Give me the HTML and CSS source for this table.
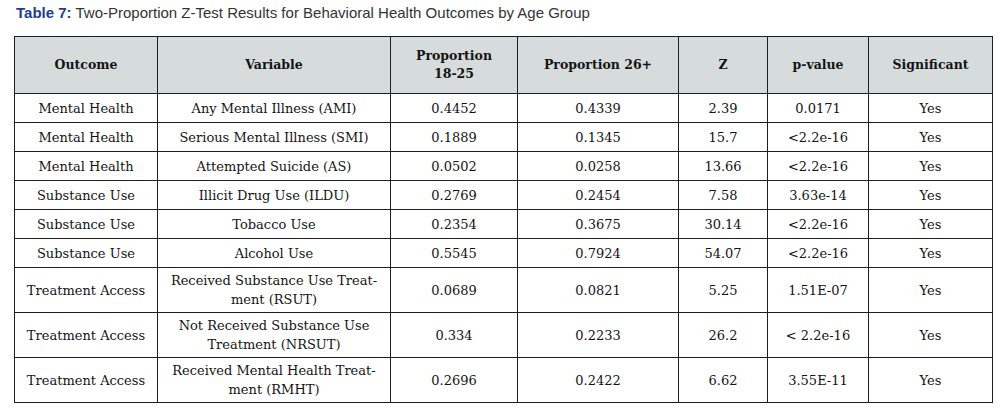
FILE: index.html
```html
<!DOCTYPE html>
<html lang="en">
<head>
<meta charset="utf-8">
<title>Table 7</title>
<link rel="stylesheet" href="styles.css">
</head>
<body>
<p class="caption"><span class="label">Table 7:</span> Two-Proportion Z-Test Results for Behavioral Health Outcomes by Age Group</p>
<table class="results">
  <colgroup>
    <col class="c1"><col class="c2"><col class="c3"><col class="c4"><col class="c5"><col class="c6"><col class="c7">
  </colgroup>
  <thead>
    <tr>
      <th>Outcome</th>
      <th>Variable</th>
      <th>Proportion<br>18-25</th>
      <th>Proportion 26+</th>
      <th>Z</th>
      <th>p-value</th>
      <th>Significant</th>
    </tr>
  </thead>
  <tbody>
    <tr><td>Mental Health</td><td>Any Mental Illness (AMI)</td><td>0.4452</td><td>0.4339</td><td>2.39</td><td>0.0171</td><td>Yes</td></tr>
    <tr><td>Mental Health</td><td>Serious Mental Illness (SMI)</td><td>0.1889</td><td>0.1345</td><td>15.7</td><td>&lt;2.2e-16</td><td>Yes</td></tr>
    <tr><td>Mental Health</td><td>Attempted Suicide (AS)</td><td>0.0502</td><td>0.0258</td><td>13.66</td><td>&lt;2.2e-16</td><td>Yes</td></tr>
    <tr><td>Substance Use</td><td>Illicit Drug Use (ILDU)</td><td>0.2769</td><td>0.2454</td><td>7.58</td><td>3.63e-14</td><td>Yes</td></tr>
    <tr><td>Substance Use</td><td>Tobacco Use</td><td>0.2354</td><td>0.3675</td><td>30.14</td><td>&lt;2.2e-16</td><td>Yes</td></tr>
    <tr><td>Substance Use</td><td>Alcohol Use</td><td>0.5545</td><td>0.7924</td><td>54.07</td><td>&lt;2.2e-16</td><td>Yes</td></tr>
    <tr><td>Treatment Access</td><td>Received Substance Use Treat-<br>ment (RSUT)</td><td>0.0689</td><td>0.0821</td><td>5.25</td><td>1.51E-07</td><td>Yes</td></tr>
    <tr><td>Treatment Access</td><td>Not Received Substance Use<br>Treatment (NRSUT)</td><td>0.334</td><td>0.2233</td><td>26.2</td><td>&lt; 2.2e-16</td><td>Yes</td></tr>
    <tr><td>Treatment Access</td><td>Received Mental Health Treat-<br>ment (RMHT)</td><td>0.2696</td><td>0.2422</td><td>6.62</td><td>3.55E-11</td><td>Yes</td></tr>
  </tbody>
</table>
</body>
</html>
```

FILE: styles.css
```css
html, body {
  margin: 0;
  padding: 0;
  background: #ffffff;
}

.caption {
  margin: 0;
  padding: 4px 0 0 16px;
  font-family: "Liberation Sans", Arial, sans-serif;
  font-size: 15px;
  line-height: 18px;
  color: #333333;
}

.caption .label {
  color: #1f3d8f;
  font-weight: bold;
}

.results {
  margin: 14px 0 0 14px;
  border-collapse: collapse;
  table-layout: fixed;
  width: 978px;
  font-family: "DejaVu Serif", Cambria, serif;
  font-size: 13px;
  color: #141414;
}

.c1 { width: 143px; }
.c2 { width: 233px; }
.c3 { width: 127px; }
.c4 { width: 161px; }
.c5 { width: 89px; }
.c6 { width: 101px; }
.c7 { width: 124px; }

.results th,
.results td {
  border: 1px solid #1e1e1e;
  text-align: center;
  vertical-align: middle;
  padding: 3px 4px;
  line-height: 19px;
}

.results th {
  background: #d6dcdc;
  font-weight: bold;
  font-size: 12.5px;
  line-height: 18px;
  height: 50px;
}

.results td {
  height: 22px;
}
```
